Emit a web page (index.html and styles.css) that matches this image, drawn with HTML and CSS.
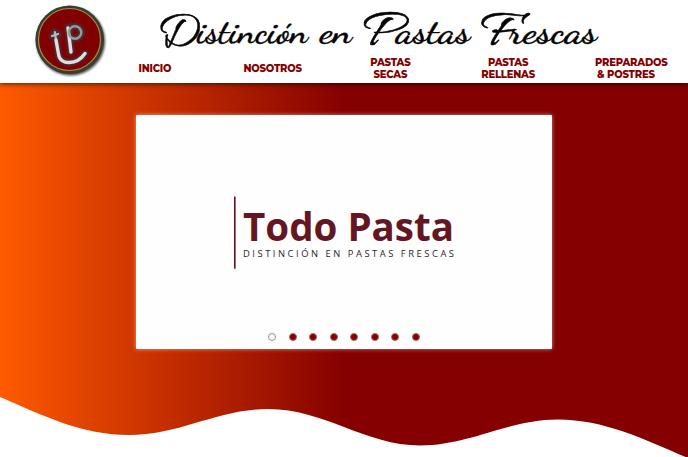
FILE: index.html
```html
<!DOCTYPE html>
<html lang="es">
<head>
<meta charset="utf-8">
<title>Todo Pasta</title>
<link rel="stylesheet" href="styles.css">
</head>
<body>
<header class="header">
  <a class="brand" href="#">
    <svg width="76" height="78" viewBox="32 2 76 78" aria-hidden="true">
      <defs>
        <filter id="soft" x="-20%" y="-20%" width="140%" height="140%"><feGaussianBlur stdDeviation="1.1"/></filter>
      </defs>
      <circle cx="70.7" cy="41.2" r="34.5" fill="#555" filter="url(#soft)"/>
      <circle cx="69.7" cy="39.7" r="34.3" fill="#383b36"/>
      <circle cx="69.5" cy="39.5" r="31" fill="#800000" stroke="#a19128" stroke-width="1.2"/>
      <g fill="none" stroke-linecap="round" stroke-linejoin="round">
        <g stroke="#44333a" stroke-width="6.5" filter="url(#soft)">
          <path d="M54.800 32 L58.500 54 C60 66 77 65 85 53.500 M52 36 L58.500 34"/>
          <path d="M68 27 L71 52"/><circle cx="75" cy="32.500" r="6.300"/>
        </g>
        <g stroke="#dedee0" stroke-width="3.4">
          <path stroke="#b9b9bd" stroke-width="2.200" d="M54.800 32 L56 40 M52 36 L58 34"/>
          <path d="M56 40 L58.500 54 C60 66 77 65 85 53.500"/>
          <path d="M68 28 L71 52"/><circle cx="75" cy="32.500" r="6.300" stroke="#98989c" stroke-width="2.500"/>
        </g>
      </g>
    </svg>
  </a>
  <div class="head-main">
    <svg class="slogan" width="592" height="55" viewBox="96 0 592 55">
      <g class="script">
        <text x="157" y="43.500" class="cap" textLength="41" lengthAdjust="spacingAndGlyphs">D</text>
        <text x="197" y="42.500" textLength="111" lengthAdjust="spacingAndGlyphs">istinción</text>
        <text x="320" y="42.500" textLength="32" lengthAdjust="spacingAndGlyphs">en</text>
        <text x="362" y="43.500" class="cap" textLength="35" lengthAdjust="spacingAndGlyphs">P</text>
        <text x="396" y="42.500" textLength="74" lengthAdjust="spacingAndGlyphs">astas</text>
        <text x="481" y="43.500" class="cap" textLength="35" lengthAdjust="spacingAndGlyphs">F</text>
        <text x="509" y="42.500" textLength="88" lengthAdjust="spacingAndGlyphs">rescas</text>
      </g>
    </svg>
    <nav class="nav">
      <a href="#">INICIO</a>
      <a href="#">NOSOTROS</a>
      <a href="#">PASTAS<br>SECAS</a>
      <a href="#">PASTAS<br>RELLENAS</a>
      <a href="#" class="wide"><span>PREPARADOS</span><span>&amp; POSTRES</span></a>
    </nav>
  </div>
</header>
<main class="hero">
  <section class="slider">
    <svg class="slide-logo" width="224" height="76" viewBox="232 195 224 76">
      <path d="M234.8 196.5V268.7" stroke="#641722" stroke-width="1.7"/>
      <text class="name" x="243" y="241" textLength="211" lengthAdjust="spacingAndGlyphs">Todo Pasta</text>
      <text class="tag" x="243" y="256.5" textLength="211">DISTINCIÓN EN PASTAS FRESCAS</text>
    </svg>
    <div class="dots"><i class="active"></i><i></i><i></i><i></i><i></i><i></i><i></i><i></i></div>
  </section>
  <svg class="wave" viewBox="0 0 688 62" preserveAspectRatio="none" aria-hidden="true">
    <path fill="#fff" d="M0 2 C44 21 82 40 129 40 C180 40 218 14 268 14 C324 14 366 50.500 420 50.500 C470 50.500 508 24.500 558 24.500 C604 24.500 646 45 688 63 V64 H0Z"/>
  </svg>
</main>
</body>
</html>
```
FILE: styles.css
```css
* { box-sizing: border-box; }
body { margin: 0; height: 457px; overflow: hidden; background: #fff; }
.header {
  position: relative;
  z-index: 1;
  display: flex;
  height: 83px;
  background: #fff;
  box-shadow: 0 1px 5px rgba(0, 0, 0, .65);
}
.brand { width: 96px; padding: 2px 0 0 32px; flex: none; }
.brand svg { display: block; }
.head-main { flex: 1; }
.slogan { display: block; overflow: visible; }
.script { font: 600 35px "Dancing Script", "Allura", "Lato", sans-serif; fill: #050505; stroke: #050505; stroke-width: .3px; }
.script .cap { font-family: "Allura", "Dancing Script", "Lato", sans-serif; font-size: 54px; font-weight: 400; stroke-width: .6px; }
.nav {
  display: grid;
  grid-template-columns: repeat(5, 117.75px);
  align-items: center;
  height: 27px;
}
.nav a {
  color: #850000;
  font: 800 10px/12px "Montserrat", "Inter", sans-serif;
  letter-spacing: -.2px;
  text-align: center;
  text-decoration: none;
}
.nav .wide { display: grid; grid-template-columns: 62px; justify-self: center; justify-items: center; }
.nav .wide span { white-space: nowrap; }
.nav .wide span:first-child { justify-self: start; }
.hero {
  display: flex;
  flex-direction: column;
  align-items: center;
  justify-content: space-between;
  height: 374px;
  padding-top: 32px;
  background: linear-gradient(90deg, #ff5a00, #850000 50%);
}
.slider {
  display: flex;
  flex-direction: column;
  align-items: center;
  justify-content: space-between;
  width: 416px;
  height: 234px;
  padding: 80px 0 8px;
  background: #fefefe;
  border-radius: 1px;
  box-shadow: 0 0 4px rgba(255, 255, 255, .55);
}
.slide-logo { display: block; }
.name { font: 700 39.5px "Open Sans", sans-serif; fill: #641722; }
.tag { font: 400 9.4px "Open Sans", sans-serif; fill: #29262b; }
.dots { display: flex; gap: 12.6px; }
.dots i { width: 8px; height: 8px; border-radius: 50%; background: #850000; border: 1px solid #b26666; }
.dots .active { background: #fff; border-color: #ad8389; }
.wave { display: block; width: 100%; height: 62px; }
```
